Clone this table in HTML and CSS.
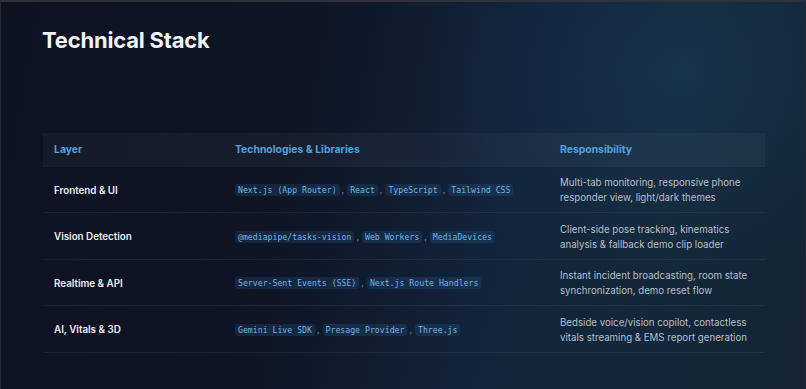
FILE: index.html
```html
<!DOCTYPE html>
<html lang="en">
<head>
<meta charset="utf-8">
<title>Technical Stack</title>
<link rel="stylesheet" href="styles.css">
</head>
<body>
<main class="slide">
  <h1 class="title">Technical Stack</h1>
  <table class="stack">
    <colgroup>
      <col class="c-layer">
      <col class="c-tech">
      <col class="c-resp">
    </colgroup>
    <thead>
      <tr>
        <th>Layer</th>
        <th>Technologies &amp; Libraries</th>
        <th>Responsibility</th>
      </tr>
    </thead>
    <tbody>
      <tr>
        <td class="layer">Frontend &amp; UI</td>
        <td class="tech"><code>Next.js (App Router)</code><span class="sep">,</span><code>React</code><span class="sep">,</span><code>TypeScript</code><span class="sep">,</span><code>Tailwind CSS</code></td>
        <td class="resp">Multi-tab monitoring, responsive phone responder view, light/dark themes</td>
      </tr>
      <tr>
        <td class="layer">Vision Detection</td>
        <td class="tech"><code>@mediapipe/tasks-vision</code><span class="sep">,</span><code>Web Workers</code><span class="sep">,</span><code>MediaDevices</code></td>
        <td class="resp">Client-side pose tracking, kinematics analysis &amp; fallback demo clip loader</td>
      </tr>
      <tr>
        <td class="layer">Realtime &amp; API</td>
        <td class="tech"><code>Server-Sent Events (SSE)</code><span class="sep">,</span><code>Next.js Route Handlers</code></td>
        <td class="resp">Instant incident broadcasting, room state synchronization, demo reset flow</td>
      </tr>
      <tr>
        <td class="layer">AI, Vitals &amp; 3D</td>
        <td class="tech"><code>Gemini Live SDK</code><span class="sep">,</span><code>Presage Provider</code><span class="sep">,</span><code>Three.js</code></td>
        <td class="resp">Bedside voice/vision copilot, contactless vitals streaming &amp; EMS report generation</td>
      </tr>
    </tbody>
  </table>
</main>
</body>
</html>
```
FILE: styles.css
```css
html, body {
  margin: 0;
  padding: 0;
  height: 100%;
}
body {
  background: #0e1220;
  font-family: "Inter", "Noto Sans", sans-serif;
  overflow: hidden;
}
.slide {
  box-sizing: border-box;
  height: 389px;
  padding: 24px 40px 0 41px;
  border-top: 2px solid #2f3239;
  border-left: 1px solid #25282f;
  border-right: 1px solid #25282f;
  background:
    radial-gradient(ellipse 260px 220px at 680px 70px, rgba(30, 70, 100, 0.35), rgba(30, 70, 100, 0) 100%),
    linear-gradient(100deg, #0e1121 0%, #0f1526 35%, #11233a 60%, #13283b 80%, #122436 100%);
}
.title {
  margin: 0;
  font-size: 22px;
  line-height: 28px;
  font-weight: 700;
  letter-spacing: -0.2px;
  color: #f2f4f7;
}
.stack {
  margin-top: 79px;
  margin-left: 1px;
  width: 722px;
  border-collapse: collapse;
  table-layout: fixed;
}
.c-layer { width: 181px; }
.c-tech { width: 325px; }
.c-resp { width: 216px; }
.stack th {
  box-sizing: border-box;
  text-align: left;
  font-size: 10.4px;
  font-weight: 700;
  color: #4ea2dd;
  height: 33px;
  padding: 1px 11px 0;
  background: rgba(255, 255, 255, 0.035);
  border-bottom: 1px solid rgba(255, 255, 255, 0.06);
}
.stack td {
  height: 46.5px;
  padding: 2px 11px 0;
  border-bottom: 1px solid rgba(255, 255, 255, 0.06);
  vertical-align: middle;
  box-sizing: border-box;
}
.layer {
  font-size: 9.8px;
  font-weight: 600;
  color: #eceef2;
}
.tech {
  white-space: nowrap;
  font-size: 0;
}
.sep {
  display: inline-block;
  font-size: 9px;
  color: #7d8593;
  padding: 0 3px 0 2px;
}
.tech code {
  font-family: "DejaVu Sans Mono", "Liberation Mono", monospace;
  font-size: 8.2px;
  line-height: 12px;
  display: inline-block;
  padding: 0 3px;
  border-radius: 3px;
  background: rgba(56, 128, 190, 0.16);
  color: #6fb3e4;
}
.resp {
  font-size: 9.7px;
  line-height: 15px;
  color: #b9bec8;
}
```
